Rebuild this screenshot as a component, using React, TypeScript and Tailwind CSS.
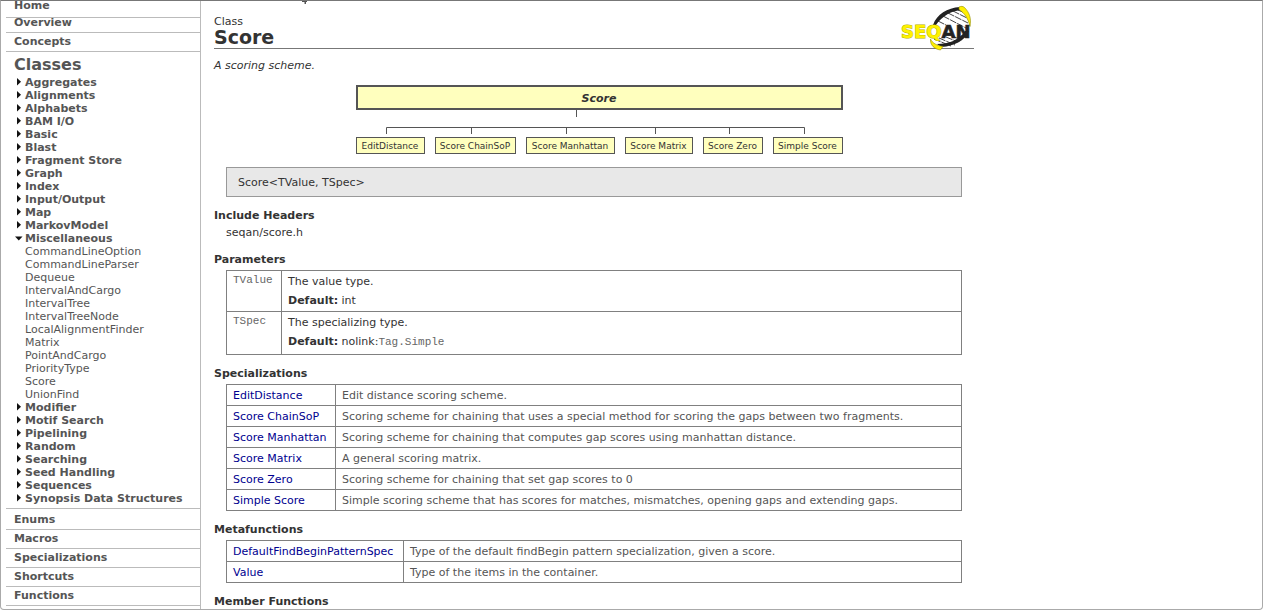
import React from "react";

const before = ["Aggregates", "Alignments", "Alphabets", "BAM I/O", "Basic", "Blast", "Fragment Store", "Graph", "Index", "Input/Output", "Map", "MarkovModel"];
const misc = ["CommandLineOption", "CommandLineParser", "Dequeue", "IntervalAndCargo", "IntervalTree", "IntervalTreeNode", "LocalAlignmentFinder", "Matrix", "PointAndCargo", "PriorityType", "Score", "UnionFind"];
const after = ["Modifier", "Motif Search", "Pipelining", "Random", "Searching", "Seed Handling", "Sequences", "Synopsis Data Structures"];
const bottom = ["Macros", "Specializations", "Shortcuts", "Functions"];

const specializations = [
  ["EditDistance", "Edit distance scoring scheme."],
  ["Score ChainSoP", "Scoring scheme for chaining that uses a special method for scoring the gaps between two fragments."],
  ["Score Manhattan", "Scoring scheme for chaining that computes gap scores using manhattan distance."],
  ["Score Matrix", "A general scoring matrix."],
  ["Score Zero", "Scoring scheme for chaining that set gap scores to 0"],
  ["Simple Score", "Simple scoring scheme that has scores for matches, mismatches, opening gaps and extending gaps."],
];
const metafunctions = [
  ["DefaultFindBeginPatternSpec", "Type of the default findBegin pattern specialization, given a score."],
  ["Value", "Type of the items in the container."],
];
const children = [
  { name: "EditDistance", width: "w-[69px]" },
  { name: "Score ChainSoP", width: "w-[81px]" },
  { name: "Score Manhattan", width: "w-[89px]" },
  { name: "Score Matrix", width: "w-[68px]" },
  { name: "Score Zero", width: "w-[60px]" },
  { name: "Simple Score", width: "w-[70px]" },
];

function Group({ name, open = false }: { name: string; open?: boolean }) {
  return (
    <a href="#" className="flex h-[13px] items-center pl-2 font-bold whitespace-nowrap">
      <svg width="11" height="9" viewBox="0 0 11 9" fill="#111" aria-hidden="true">
        {open ? <path d="M1 2.500h7.500L4.750 6.500z" /> : <path d="M3 0v7.500L7 3.750z" />}
      </svg>
      {name}
    </a>
  );
}

function NavRow({ name }: { name: string }) {
  return (
    <a href="#" className="block h-[19px] border-b border-[#bbb] pl-2 leading-[17px] font-bold">
      {name}
    </a>
  );
}

function Logo() {
  return (
    <svg width="76" height="50" viewBox="0 0 76 50" role="img" aria-label="SeqAn">
      <path d="M34 38l1-13C40 14 49 8 62 6l8 12v14c-6 8-14 12-28 13z" fill="#fff" />
      <path d="M45 15l23 12M50 12l20 10M55 10l14 7M60 9l7 3M40 20l8 4M36 38l17 7M41 37l16 7M48 36l12 5M56 36l8 3" stroke="#444" strokeWidth="1" strokeDasharray="7 1" />
      <path d="M35 24C39 13 49 7 62 6l2 3C54 9.500 44 15 38 24z" fill="#222" />
      <path d="M71 30C67 39 58 45 43 46l-4-3c12 0 22-4 28-13z" fill="#222" />
      <path d="M61 6c2-1 4-.8 5.500.5 5 5 7 11 5.500 19-2-8-5-13-11-17z" fill="#ffef00" stroke="#8f8900" strokeWidth=".6" />
      <path d="M32.500 38c2 4 6 6.500 12.500 7.500L42.500 49C36 48 32 44 32.500 38z" fill="#ffef00" stroke="#8f8900" strokeWidth=".6" />
      <text x="3" y="37" fontSize="18" fontWeight="700" fontFamily="DejaVu Sans, sans-serif" paintOrder="stroke">
        <tspan fill="#fff200" stroke="#b5b000" strokeWidth="1">SEQ</tspan>
        <tspan fill="#222" stroke="#222" strokeWidth=".6">AN</tspan>
      </text>
    </svg>
  );
}

function LinkTable({ rows, column, label }: { rows: string[][]; column: string; label: string }) {
  return (
    <table aria-label={label} className="w-full table-fixed border-collapse">
      <colgroup>
        <col className={column} />
        <col />
      </colgroup>
      <tbody>
        {rows.map(([name, text]) => (
          <tr key={name} className="h-[21px]">
            <td className="border border-[#808080] px-1.5 py-0 whitespace-nowrap"><a href="#" className="text-[#00008f]">{name}</a></td>
            <td className="border border-[#808080] px-1.5 py-0 text-[#555]">{text}</td>
          </tr>
        ))}
      </tbody>
    </table>
  );
}

function Section({ title, children: body }: { title: string; children?: React.ReactNode }) {
  return (
    <section className="pb-3">
      <h2 className="h-[17px] font-bold leading-[14px]">{title}</h2>
      <div className="px-3">{body}</div>
    </section>
  );
}

export default function App() {
  return (
    <div className="relative flex h-screen overflow-hidden rounded-b border border-[#aaa] border-t-[#777] bg-white font-['DejaVu_Sans',Verdana,sans-serif] text-[11px] leading-[13px] text-[#333]">
      <svg className="absolute top-0 left-[301px]" width="6" height="3" viewBox="0 0 6 3" aria-hidden="true">
        <path d="M0 0h5v1H4v2H2.500V1H0z" fill="#555" />
      </svg>
      <nav className="w-[200px] shrink-0 border-r border-[#bbb] pl-[5px] text-[#555]">
        <div className="flex h-[17px] flex-col border-b border-[#bbb] pl-2 font-bold">
          <a href="#" className="leading-[9px]">Home</a>
        </div>
        <div className="flex h-[15px] flex-col border-b border-[#bbb] pl-2 font-bold">
          <a href="#" className="leading-[9px]">Overview</a>
        </div>
        <NavRow name="Concepts" />
        <div className="border-b border-[#bbb] pt-[3px] pb-[3px]">
          <h2 className="h-[21px] pl-2 text-[16px] leading-[19px] font-bold">Classes</h2>
          {before.map((name) => <Group key={name} name={name} />)}
          <Group name="Miscellaneous" open />
          {misc.map((name) => <a key={name} href="#" className="block h-[13px] pl-[19px]">{name}</a>)}
          {after.map((name) => <Group key={name} name={name} />)}
        </div>
        <div className="pt-0.5">
          <NavRow name="Enums" />
          {bottom.map((name) => <NavRow key={name} name={name} />)}
        </div>
      </nav>
      <main className="min-w-0 max-w-[773px] flex-1 pl-[13px]">
        <header className="flex h-12 justify-between border-b border-[#777]">
          <div className="pt-[14px]">
            <p>Class</p>
            <h1 className="text-[19px] leading-[18px] font-bold">Score</h1>
          </div>
          <Logo />
        </header>
        <p className="pt-[10px] italic">A scoring scheme.</p>
        <div className="flex justify-center pt-[13px] pl-[10px]">
          <div className="w-[487px]">
            <div className="flex h-[25px] items-center justify-center border-2 border-[#555] bg-[#ffffbe] pt-0.5 font-bold italic">Score</div>
            <svg className="block h-[27px] w-full" viewBox="0 0 487 27" fill="none" stroke="#555" aria-hidden="true">
              <path d="M220.500 0v7M30.500 24v-6.500h418V24M115.500 17v7M210.500 17v7M299.500 17v7M373.500 17v7" />
            </svg>
            <div className="flex justify-between">
              {children.map((child) => (
                <a key={child.name} href="#" className={`flex h-[17px] items-center justify-center border border-[#555] bg-[#ffffbe] pt-0.5 text-[9px] whitespace-nowrap ${child.width}`}>{child.name}</a>
              ))}
            </div>
          </div>
        </div>
        <div className="mx-3 mt-[13px] mb-3 flex h-[30px] items-center border border-[#999] bg-[#e8e8e8] pl-[11px]">Score&lt;TValue, TSpec&gt;</div>
        <Section title="Include Headers">
          <p className="h-[15px]">seqan/score.h</p>
        </Section>
        <Section title="Parameters">
          <table aria-label="Parameters" className="w-full table-fixed border-collapse">
            <colgroup>
              <col className="w-[55px]" />
              <col />
            </colgroup>
            <tbody>
              <tr className="h-[41px] align-top">
                <td className="border border-[#808080] px-1.5 pt-[3px] font-['Liberation_Mono',monospace] text-[#666]">TValue</td>
                <td className="border border-[#808080] px-1.5 pt-px leading-[19px]"><p>The value type.</p><p><b>Default:</b> int</p></td>
              </tr>
              <tr className="h-[43px] align-top">
                <td className="border border-[#808080] px-1.5 pt-[3px] font-['Liberation_Mono',monospace] text-[#666]">TSpec</td>
                <td className="border border-[#808080] px-1.5 pt-px leading-[19px]"><p>The specializing type.</p><p><b>Default:</b> nolink:<code className="font-['Liberation_Mono',monospace] text-[#666]">Tag.Simple</code></p></td>
              </tr>
            </tbody>
          </table>
        </Section>
        <Section title="Specializations"><LinkTable rows={specializations} column="w-[109px]" label="Specializations" /></Section>
        <Section title="Metafunctions"><LinkTable rows={metafunctions} column="w-[177px]" label="Metafunctions" /></Section>
        <Section title="Member Functions" />
      </main>
    </div>
  );
}
